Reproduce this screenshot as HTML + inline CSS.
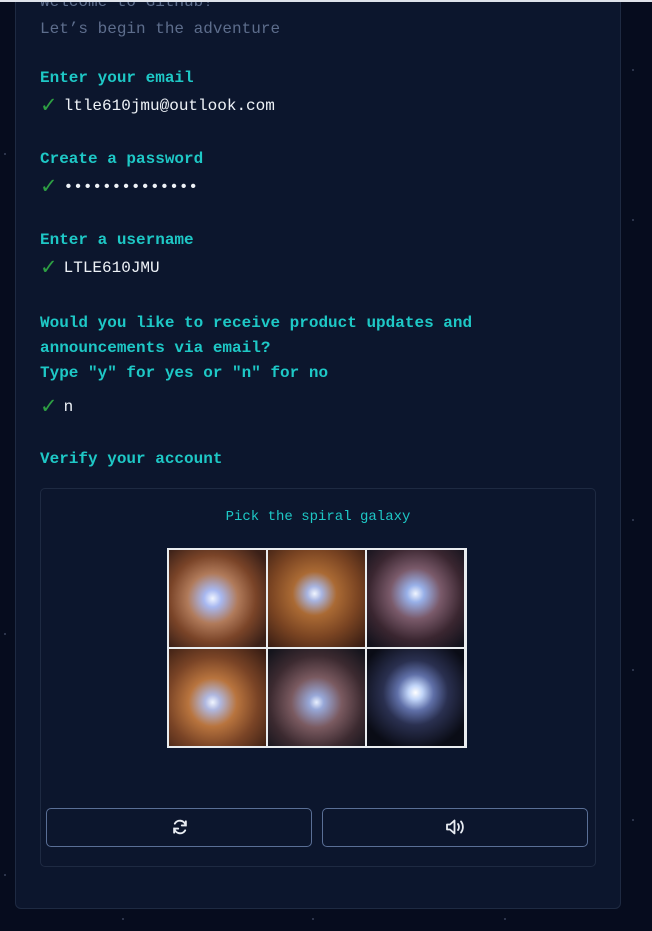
<!DOCTYPE html>
<html><head><meta charset="utf-8"><style>
*{margin:0;padding:0;box-sizing:border-box}
body{width:652px;height:931px;background:#060c1e;overflow:hidden;position:relative;font-family:"Liberation Mono",monospace;font-size:16px}
.topline{position:absolute;left:0;top:0;width:652px;height:2px;background:#dfe3ea;z-index:5}
.card{position:absolute;left:15px;top:-10px;width:606px;height:919px;background:#0c162d;border:1px solid #1e2a42;border-radius:6px}
.t{position:absolute;left:40px;white-space:pre}
.g{color:#5d6d8c}
.c{color:#1ec8c6;font-weight:bold}
.w{color:#eef2f7}
.ck{color:#2ea043;font-family:"DejaVu Sans",sans-serif;font-size:21px;line-height:16px;margin-right:6px;display:inline-block;vertical-align:-2px}
.cap{position:absolute;left:40px;top:488px;width:556px;height:379px;border:1px solid #1e2a42;border-radius:5px;background:#0c162d}
.pick{position:absolute;left:0;width:100%;top:20px;text-align:center;color:#1ec8c6;font-size:14px}
.grid{position:absolute;left:126px;top:59px;width:300px;height:200px;background:#e9ecef;padding:2px;display:grid;grid-template-columns:repeat(3,97px);grid-template-rows:repeat(2,97px);gap:2px}
.grid div{background:#120c10}
.b{position:absolute;top:319px;width:266px;height:39px;border:1px solid #5a6f96;border-radius:5px;background:#0c162d}
.dot{position:absolute;width:2px;height:2px;background:#39435a;border-radius:1px}
</style></head><body>
<div class="topline"></div>
<div class="dot" style="left:4px;top:153px"></div>
<div class="dot" style="left:4px;top:633px"></div>
<div class="dot" style="left:4px;top:874px"></div>
<div class="dot" style="left:632px;top:69px"></div>
<div class="dot" style="left:632px;top:219px"></div>
<div class="dot" style="left:632px;top:519px"></div>
<div class="dot" style="left:632px;top:669px"></div>
<div class="dot" style="left:632px;top:819px"></div>
<div class="dot" style="left:122px;top:918px"></div>
<div class="dot" style="left:312px;top:918px"></div>
<div class="dot" style="left:504px;top:918px"></div>
<div class="card"></div>
<div class="t g" style="top:-7px">Welcome to GitHub!</div>
<div class="t g" style="top:20px">Let’s begin the adventure</div>
<div class="t c" style="top:69px">Enter your email</div>
<div class="t w" style="top:97px"><span class="ck">✓</span>ltle610jmu@outlook.com</div>
<div class="t c" style="top:150px">Create a password</div>
<div class="t w" style="top:178px"><span class="ck">✓</span>••••••••••••••</div>
<div class="t c" style="top:231px">Enter a username</div>
<div class="t w" style="top:259px"><span class="ck">✓</span>LTLE610JMU</div>
<div class="t c" style="top:311px;line-height:25px">Would you like to receive product updates and
announcements via email?
Type "y" for yes or "n" for no</div>
<div class="t w" style="top:398px"><span class="ck">✓</span>n</div>
<div class="t c" style="top:450px">Verify your account</div>
<div class="cap">
<div class="pick">Pick the spiral galaxy</div>
<div class="grid">
<div style="background:radial-gradient(circle at 45% 50%,#f0f5ff 0,#a8b8f0 12%,#b07a5a 35%,#7a4428 60%,#3a2018 90%)"></div>
<div style="background:radial-gradient(circle at 48% 45%,#f0f5ff 0,#a8b4e0 10%,#aa6a34 30%,#7a4422 60%,#3a1e14 95%)"></div>
<div style="background:radial-gradient(circle at 50% 45%,#f0f5ff 0,#98b0e8 12%,#7a5a6a 35%,#3a2630 65%,#12121c 95%)"></div>
<div style="background:radial-gradient(circle at 45% 55%,#f0f5ff 0,#b0b8e0 10%,#b8743e 32%,#7a4426 60%,#3a1e14 95%)"></div>
<div style="background:radial-gradient(circle at 50% 55%,#e8f0ff 0,#98a8d8 10%,#7a5a60 35%,#3c2a30 65%,#14141c 95%)"></div>
<div style="background:radial-gradient(circle at 50% 45%,#ffffff 0,#c0d4f8 10%,#6070a8 25%,#2a3050 45%,#0a0c16 80%)"></div>
</div>
<div class="b" style="left:5px"><svg style="position:absolute;left:124px;top:9px" width="18" height="18" viewBox="0 0 16 16" fill="none" stroke="#e8ecf2" stroke-width="1.7" stroke-linecap="round"><path d="M13 6.5A5.2 5.2 0 0 0 3.4 5"/><path d="M3 9.5A5.2 5.2 0 0 0 12.6 11"/><path d="M13.2 3v3.6H9.6"/><path d="M2.8 13V9.4h3.6"/></svg></div>
<div class="b" style="left:281px"><svg style="position:absolute;left:122px;top:8px" width="22" height="20" viewBox="0 0 22 18" fill="none" stroke="#e8ecf2" stroke-width="1.8" stroke-linejoin="round" stroke-linecap="round"><path d="M2 6.5h3l4.5-4v13l-4.5-4H2z"/><path d="M13 6c1.3 1.6 1.3 4.4 0 6"/><path d="M16 3.5c2.5 3 2.5 8 0 11"/></svg></div>
</div>
</body></html>
